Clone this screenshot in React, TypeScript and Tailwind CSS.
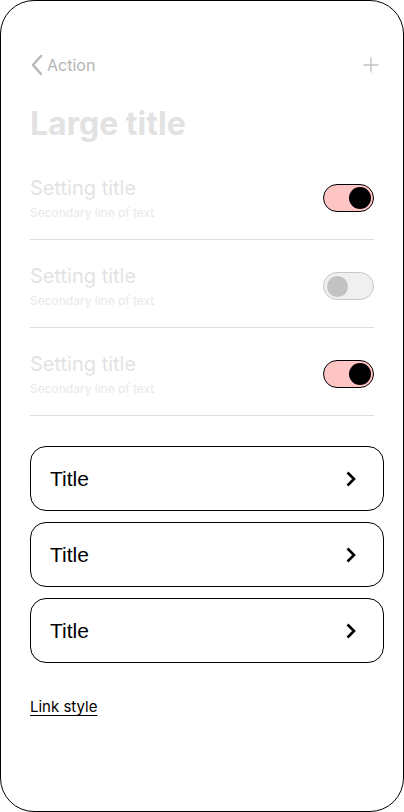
import React from "react";

const settings = [
  { title: "Setting title", sub: "Secondary line of text", on: true },
  { title: "Setting title", sub: "Secondary line of text", on: false },
  { title: "Setting title", sub: "Secondary line of text", on: true },
];

const Toggle: React.FC<{ on: boolean }> = ({ on }) =>
  on ? (
    <div className="w-[51px] h-[28px] rounded-full border border-black bg-[#ffc4c4] flex items-center justify-end pr-[2px]">
      <div className="w-[22px] h-[22px] rounded-full bg-black" />
    </div>
  ) : (
    <div className="w-[51px] h-[28px] rounded-full border border-[#c8c8c8] bg-[#f0f0f0] flex items-center pl-[3px]">
      <div className="w-[21px] h-[21px] rounded-full bg-[#c2c2c2]" />
    </div>
  );

const App: React.FC = () => {
  return (
    <div className="w-[404px] h-[812px] bg-white border border-black rounded-[34px] overflow-hidden font-['Inter',sans-serif]">
      <div className="pl-[29px] pr-[19px] pt-[52px]">
        {/* Nav */}
        <div className="flex items-center justify-between h-[24px] pr-[5px]">
          <div className="flex items-center gap-[3px] text-[#b5b5b5]">
            <svg width="14" height="22" viewBox="0 0 14 22" fill="none">
              <path d="M11 2L3 11L11 20" stroke="#b8b8b8" strokeWidth="2.4" strokeLinecap="round" strokeLinejoin="round" />
            </svg>
            <span className="text-[16px] leading-none">Action</span>
          </div>
          <svg width="16" height="16" viewBox="0 0 16 16" fill="none">
            <path d="M8 0.5V15.5M0.5 8H15.5" stroke="#c4c4c4" strokeWidth="1.4" />
          </svg>
        </div>

        {/* Large title */}
        <h1 className="mt-[27px] text-[32px] leading-[40px] font-bold text-[#e2e2e2]">Large title</h1>

        {/* Settings */}
        <div className="mt-[8px] pr-[10px]">
          {settings.map((s, i) => (
            <div key={i} className="flex items-start justify-between h-[88px] border-b border-[#dddddd]">
              <div className="pt-[23px]">
                <div className="text-[20px] leading-[26px] text-[#e3e3e3]">{s.title}</div>
                <div className="text-[12px] leading-[14px] text-[#e8e8e8] mt-[5px]">{s.sub}</div>
              </div>
              <div className="mt-[32px]">
                <Toggle on={s.on} />
              </div>
            </div>
          ))}
        </div>

        {/* Cards */}
        <div className="mt-[30px] flex flex-col gap-[11px]">
          {[0, 1, 2].map((i) => (
            <div
              key={i}
              className="h-[65px] rounded-[16px] border border-black flex items-center justify-between pl-[19px] pr-[26px]"
            >
              <span className="text-[21px] text-black font-['Liberation_Sans',Arial,sans-serif]">Title</span>
              <svg width="12" height="16" viewBox="0 0 12 16" fill="none">
                <path d="M2.5 1.5L9 8L2.5 14.5" stroke="black" strokeWidth="2.6" strokeLinejoin="miter" />
              </svg>
            </div>
          ))}
        </div>

        <div className="mt-[31px]">
          <a className="text-[15px] text-black underline underline-offset-[3px]">Link style</a>
        </div>
      </div>
    </div>
  );
};

export default App;
